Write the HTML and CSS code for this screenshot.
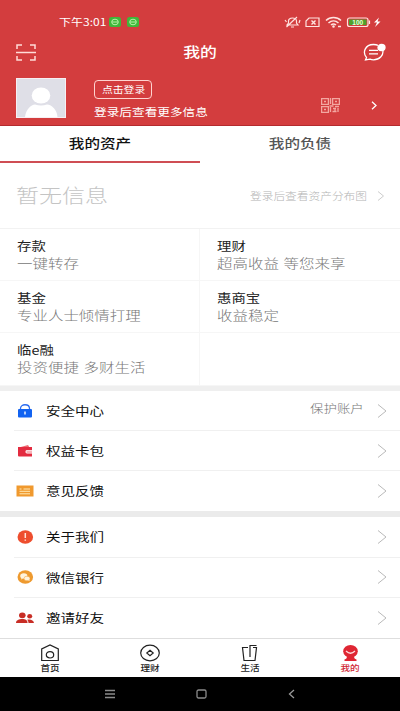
FILE: index.html
```html
<!DOCTYPE html>
<html lang="zh-CN">
<head>
<meta charset="utf-8">
<title>我的</title>
<link rel="stylesheet" href="styles.css">
</head>
<body>
<div class="app">
  <header class="header">
    <div class="status">
      <span class="t clock">下午3:01</span>
      <svg class="chips" width="32" height="12" viewBox="0 0 32 12"><g fill="#3fb83a"><rect x="0" y="1" width="12" height="10" rx="2.5"/><rect x="18" y="1" width="12" height="10" rx="2.5"/></g><g fill="none" stroke="#b9f0a8" stroke-width="1"><ellipse cx="6" cy="6" rx="3.3" ry="2.8"/><path d="M3 6h6"/><ellipse cx="24" cy="6" rx="3.3" ry="2.8"/><path d="M21 6h6"/></g></svg>
      <svg class="signals" width="100" height="14" viewBox="0 0 100 14" fill="none" stroke="#ffe3e0" stroke-width="1.2">
        <path d="M3 10h11l-1.500-2V6c0-4-8-4-8 0v2zM7 12h3M2.500 12L13 2M1 5l1.500 2M16 5l-1 3"/>
        <path d="M25 3h10v8.500H22V6z"/><path d="M27.500 5.500l4 4M31.500 5.500l-4 4" stroke-width="1.400"/>
        <path d="M42 5.500c4-4 11-4 15 0M44.500 8c3-2.700 7-2.700 10 0M47 10c1.500-1.300 3.500-1.300 5 0M54 11.500h3" stroke-width="1.500"/><circle cx="49.500" cy="11.500" r=".7"/>
        <rect x="63.500" y="3" width="20.500" height="8.500" rx="2"/><rect x="65" y="4.500" width="17.500" height="5.500" fill="#4f9f2c" stroke="none"/><path d="M85.500 5.500v3.500"/><text x="73.800" y="10" text-anchor="middle" class="charge">100</text>
        <path d="M95 2.500l-5 5h3l-2 4.500 5.500-5.500h-3z" fill="#fff" stroke="none"/>
      </svg>
    </div>
    <div class="titlebar">
      <svg width="20" height="17" viewBox="0 0 20 17" fill="none" stroke="#ffdcd8" stroke-width="1.500"><path d="M1 5V1h5M14 1h5v4M1 12v4h5M14 16h5v-4M0 8.500h20"/></svg>
      <h1 class="t title">我的</h1>
      <svg width="23" height="19" viewBox="0 0 23 19" fill="none" stroke="#fff" stroke-width="1.300"><path d="M19.800 7c1 5-3 9.800-9.300 9.800-1.500 0-2.500-.2-3.500-.6L2.500 17l1-2.500C-.8 9.500 2 1.500 10.500 1.500c2 0 3.500.3 4.500.8M6 7.300h9M6 10.800h9"/><ellipse cx="18.500" cy="4.500" rx="3.500" ry="3" fill="#fff"/></svg>
    </div>
    <div class="profile">
      <svg class="avatar" width="50" height="40" viewBox="0 0 50 40"><rect width="50" height="40" fill="#f7eff3"/><rect x="1" y="1" width="48" height="38" fill="#dfdfe7"/><ellipse cx="25" cy="17.500" rx="9.300" ry="8" fill="#fff"/><path d="M9 39c1-8 6-12 10-12.500q6 2 12 0c5 .5 10 5 10.500 12.500z" fill="#fff"/></svg>
      <div class="login">
        <a class="login-button"><span class="t">点击登录</span></a>
        <span class="t hint">登录后查看更多信息</span>
      </div>
      <svg class="qr" width="19" height="15" viewBox="0 0 19 15" fill="none" stroke="#f3a7a1" stroke-width="1.300"><path d="M.6.600h6.800v5.800H.6zM11.600.600h6.800v5.800h-6.800zM.6 8.600h6.800v5.800H.6zM3 3.500h2M14 3.500h2M3 11.500h2M9.500 0v6M8.500 8h4M14 8.500h4M9.500 9v5M12 10.500h3M17 10v4M11.500 13.500h4M14 11v3"/></svg>
      <svg class="go" width="6" height="9" viewBox="0 0 6 9" fill="none" stroke="#fff" stroke-width="1.300"><path d="M1 .8l4 3.700-4 3.700"/></svg>
    </div>
  </header>
  <nav class="tabs">
    <a class="tab active"><span class="t">我的资产</span></a>
    <a class="tab"><span class="t">我的负债</span></a>
  </nav>
  <section class="summary">
    <span class="t empty">暂无信息</span>
    <span class="t chart">登录后查看资产分布图</span>
    <svg width="8" height="10" viewBox="0 0 8 10" fill="none" stroke="#ccc"><path d="M1 .5l5.500 4.500L1 9.500"/></svg>
  </section>
  <section class="products">
    <div class="product"><span class="t name">存款</span><span class="t desc">一键转存</span></div>
    <div class="product"><span class="t name">理财</span><span class="t desc">超高收益 等您来享</span></div>
    <div class="product"><span class="t name">基金</span><span class="t desc">专业人士倾情打理</span></div>
    <div class="product"><span class="t name">惠商宝</span><span class="t desc">收益稳定</span></div>
    <div class="product"><span class="t name">临e融</span><span class="t desc">投资便捷 多财生活</span></div>
    <div class="product"></div>
  </section>
  <section class="menu first">
    <a class="row">
      <svg class="icon" width="18" height="16" viewBox="0 0 18 16"><path d="M4.500 7V5.500c0-5 9-5 9 0V7" fill="none" stroke="#2b6cf0" stroke-width="1.300"/><rect x="2" y="6" width="14" height="8.500" rx="1" fill="#1263f1"/><path d="M9 8.500v3" stroke="#fff" stroke-width="1.400"/></svg>
      <span class="t label">安全中心</span><span class="t note">保护账户</span>
      <svg class="chev" width="10" height="14" viewBox="0 0 10 14"><path d="M1 .5L9 7l-8 6.500"/></svg>
    </a>
    <a class="row">
      <svg class="icon" width="18" height="16" viewBox="0 0 18 16"><path d="M3 4.500l9-2.500 1.500 2.500z" fill="#ef6a72"/><path d="M2 4h14v3h-5c-2 0-2 3.500 0 3.500h5v3H3q-1 0-1-1z" fill="#e32c40"/><rect x="10.500" y="7.500" width="5.500" height="2.500" fill="#f7b4ba"/></svg>
      <span class="t label">权益卡包</span>
      <svg class="chev" width="10" height="14" viewBox="0 0 10 14"><path d="M1 .5L9 7l-8 6.500"/></svg>
    </a>
    <a class="row">
      <svg class="icon" width="18" height="16" viewBox="0 0 18 16"><rect x=".5" y="2.500" width="17" height="11" fill="#f0992e"/><path d="M3.500 6h2M7.500 6h6.500M3.500 8.300h10.500M3.500 10.800h10.500" stroke="#ffe9b5" stroke-width="1"/></svg>
      <span class="t label">意见反馈</span>
      <svg class="chev" width="10" height="14" viewBox="0 0 10 14"><path d="M1 .5L9 7l-8 6.500"/></svg>
    </a>
  </section>
  <section class="menu second">
    <a class="row">
      <svg class="icon" width="18" height="16" viewBox="0 0 18 16"><ellipse cx="9.300" cy="8" rx="7.800" ry="6.700" fill="#ee4e2e"/><path d="M9.300 4v5M9.300 10.500v1.300" stroke="#ffe4d8" stroke-width="1.500"/></svg>
      <span class="t label">关于我们</span>
      <svg class="chev" width="10" height="14" viewBox="0 0 10 14"><path d="M1 .5L9 7l-8 6.500"/></svg>
    </a>
    <a class="row">
      <svg class="icon" width="18" height="16" viewBox="0 0 18 16"><ellipse cx="9.300" cy="8" rx="7.800" ry="6.700" fill="#ee9a2f"/><ellipse cx="7.800" cy="7" rx="3.600" ry="2.800" fill="#fff3dc"/><ellipse cx="11" cy="9.500" rx="3" ry="2.300" fill="#fff3dc" stroke="#ee9a2f" stroke-width=".5"/><path d="M5.500 9l-.5 1.500 2-1zM12 11l1.500 1v-1.500z" fill="#fff3dc"/></svg>
      <span class="t label">微信银行</span>
      <svg class="chev" width="10" height="14" viewBox="0 0 10 14"><path d="M1 .5L9 7l-8 6.500"/></svg>
    </a>
    <a class="row">
      <svg class="icon" width="18" height="16" viewBox="0 0 18 16" fill="#c82d25"><ellipse cx="6.300" cy="5.300" rx="3.300" ry="2.900"/><path d="M0 13c0-3 3-4 6.300-4s5.200 1 5.200 4z"/><ellipse cx="13.700" cy="6.300" rx="2.500" ry="2.200"/><path d="M12.500 13c0-1.500-.5-2.500-1.300-3.300 3-.9 6.500.3 6.800 3.300z"/></svg>
      <span class="t label">邀请好友</span>
      <svg class="chev" width="10" height="14" viewBox="0 0 10 14"><path d="M1 .5L9 7l-8 6.500"/></svg>
    </a>
  </section>
  <nav class="bottom">
    <a class="item"><svg width="20" height="18" viewBox="0 0 20 18" fill="none" stroke="#222" stroke-width="1.200"><path d="M1.700 16.500V5L10 1l8.300 4v11.500z"/><ellipse cx="10" cy="10.800" rx="3.700" ry="3.200"/></svg><span class="t">首页</span></a>
    <a class="item"><svg width="20" height="18" viewBox="0 0 20 18" fill="none" stroke="#222" stroke-width="1.200"><ellipse cx="10" cy="9" rx="9.300" ry="7.800"/><path d="M10 6.300L13.200 9 10 11.700 6.800 9z"/></svg><span class="t">理财</span></a>
    <a class="item"><svg width="20" height="18" viewBox="0 0 20 18" fill="none" stroke="#222" stroke-width="1.200"><path d="M8 3.500H2.500L4 16.500h11l1.500-13H13M10 13V1.500h6.500"/></svg><span class="t">生活</span></a>
    <a class="item current"><svg width="20" height="18" viewBox="0 0 20 18"><ellipse cx="10.500" cy="7.300" rx="7.300" ry="6.300" fill="#df2633"/><path d="M7 12h7q0 3 2.500 3.500v1.500h-12v-1.500Q7 15 7 12z" fill="#df2633"/><path d="M6 7q4.500 4.500 9 0" fill="none" stroke="#ffd9dc" stroke-width="1.300"/></svg><span class="t">我的</span></a>
  </nav>
  <footer class="system">
    <svg width="10" height="10" viewBox="0 0 10 10" stroke="#8a8a8a" stroke-width="1.400"><path d="M0 1.500h10M0 5h10M0 8.500h10"/></svg>
    <svg width="11" height="10" viewBox="0 0 11 10" fill="none" stroke="#8a8a8a" stroke-width="1.300"><rect x="1" y="1" width="9" height="8" rx="1.500"/></svg>
    <svg width="8" height="10" viewBox="0 0 8 10" fill="none" stroke="#9a9a9a" stroke-width="1.300"><path d="M6 1L1.500 5 6 9"/></svg>
  </footer>
</div>
</body>
</html>
```
FILE: styles.css
```css
* { box-sizing: border-box; }
body { margin: 0; background: #fff; font-family: "Noto Sans CJK SC", sans-serif; color: #222; }
.app { width: 400px; height: 711px; overflow: hidden; display: flex; flex-direction: column; }
svg { display: block; flex: none; }

/* Wide lettering used throughout the interface */
.t { display: block; flex: none; white-space: nowrap; transform: scaleX(1.2); transform-origin: left center; }

.header { height: 126px; background: #d33d3e; border-bottom: 1px solid #b42b2e; color: #fff; }
.status { height: 34px; padding: 10px 16px 0 59px; display: flex; align-items: flex-start; }
.clock { width: 50px; font-size: 10px; line-height: 24px; height: 24px; }
.chips { margin-top: 6px; }
.signals { margin: 5px 0 0 143px; }
.charge { font: bold 6.500px "Liberation Sans", sans-serif; fill: #e9ffd8; stroke: none; }
.titlebar { height: 36px; padding: 0 14px 0 16px; display: flex; align-items: center; justify-content: space-between; }
.title { margin: -2px 0 0; font-size: 14px; line-height: 20px; font-weight: 500; transform-origin: center; }
.profile { height: 55px; padding: 8px 23px 0 16px; display: flex; align-items: flex-start; }
.login { margin: 2px 0 0 28px; width: 227px; }
.login-button { display: flex; width: 58px; height: 19px; padding-left: 7px; border: 1px solid #ffd3cf; border-radius: 4px; }
.login-button .t { font-size: 9px; line-height: 17px; }
.hint { font-size: 10.550px; line-height: 16px; margin-top: 5px; }
.qr { margin-top: 20px; }
.go { margin: 23px 0 0 31px; }

.tabs { height: 37px; display: flex; }
.tab { width: 200px; height: 37px; display: flex; justify-content: center; border-bottom: 1px solid transparent; color: #555; }
.tab .t { font-size: 13px; line-height: 33px; font-weight: 500; transform-origin: center; }
.tab.active { color: #111; border-bottom: 2px solid #cf4d54; }

.summary { height: 66px; padding: 0 16px; display: flex; align-items: center; border-bottom: 1px solid #f2f2f2; }
.empty { width: 234px; margin-top: -2px; font-size: 19.200px; font-weight: 300; color: #c4c4c4; }
.chart { width: 127px; font-size: 9.750px; color: #b4b4b4; font-weight: 300; }

.products { display: grid; grid-template-columns: 200px 200px; grid-template-rows: 52px 52px 53px; }
.product { padding: 8px 0 0 17px; border-bottom: 1px solid #f6f6f6; }
.product:nth-child(odd) { border-right: 1px solid #f6f6f6; }
.name { font-size: 12px; line-height: 18px; color: #222; }
.desc { font-size: 12.900px; line-height: 18px; margin-top: -1px; font-weight: 300; color: #777; word-spacing: 1px; }

.menu { background: #fff; }
.first { border-top: 5px solid #efefef; }
.second { border-top: 6px solid #ebebeb; height: 127px; }
.row { height: 40px; margin-left: 14px; padding: 0 13px 0 2px; display: flex; align-items: center; border-bottom: 1px solid #f0f0f0; }
.second .row { height: 40.500px; }
.first .row:last-child { border-bottom-color: transparent; }
.label { margin-left: 12px; font-size: 12.100px; color: #111; }
.note { margin: -5px 0 0 auto; font-size: 11.200px; font-weight: 300; color: #777; transform-origin: right center; }
.chev { margin-left: auto; fill: none; stroke: #b9b9b9; stroke-width: 1; }
.note + .chev { margin-left: 13px; }

.bottom { height: 39px; display: flex; border-top: 1px solid #dedede; background: #fff; }
.item { width: 100px; padding-top: 5px; display: flex; flex-direction: column; align-items: center; color: #222; }
.item .t { font-size: 8px; line-height: 11px; font-weight: 500; transform-origin: center; }
.item.current { color: #d02632; }

.system { height: 34px; background: #000; display: flex; align-items: center; justify-content: space-between; padding: 0 104px 0 105px; }
```
